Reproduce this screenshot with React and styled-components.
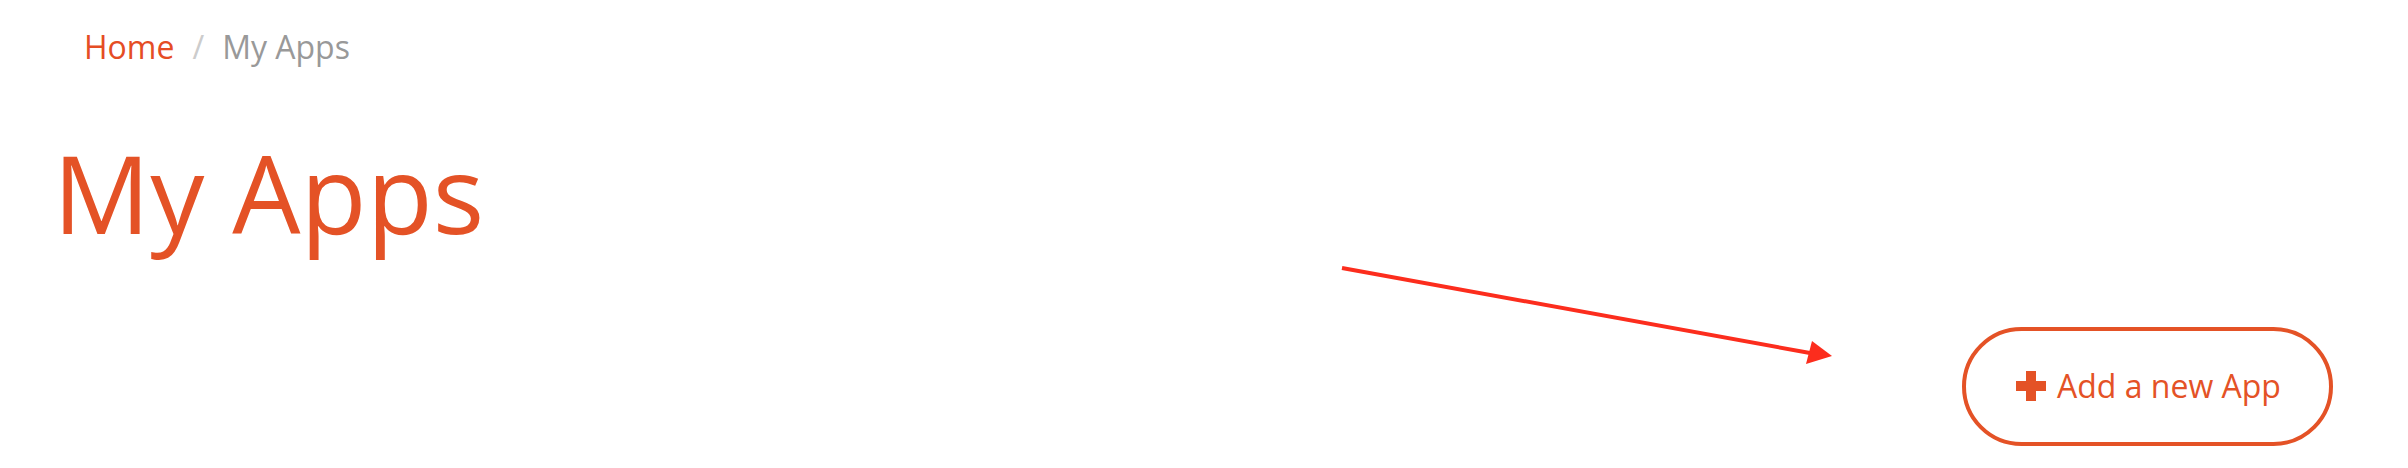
import React from "react";
import styled, { createGlobalStyle } from "styled-components";

const Global = createGlobalStyle`
  html, body { margin: 0; padding: 0; background: #ffffff; }
  body { font-family: "Open Sans", "Noto Sans", sans-serif; }
  * { box-sizing: border-box; }
`;

const Page = styled.div`
  position: relative;
  display: flex;
  flex-direction: column;
  padding: 23px 75px 0 53px;
  min-height: 468px;
`;

const Breadcrumb = styled.nav`
  display: flex;
  align-items: baseline;
  margin-left: 31px;
  font-size: 32px;
  line-height: 48px;
`;

const Crumb = styled.span`
  color: ${(p) => (p.$active ? "#999999" : "#e54d24")};
`;

const Sep = styled.span`
  color: #cccccc;
  padding: 0 18px;
`;

const Title = styled.h1`
  margin: 63px 0 0;
  font-size: 108px;
  font-weight: 400;
  line-height: 118.8px;
  color: #e45226;
`;

const Actions = styled.div`
  display: flex;
  justify-content: flex-end;
  margin-top: 74px;
`;

const AddButton = styled.button`
  display: flex;
  align-items: center;
  justify-content: center;
  gap: 11px;
  width: 371px;
  height: 119px;
  padding: 0 0 0 2px;
  border: 4px solid #e45226;
  border-radius: 60px;
  background: #ffffff;
  color: #e45226;
  font-family: "Open Sans", "Noto Sans", sans-serif;
  font-size: 32px;
  line-height: 32px;
  cursor: pointer;
`;

const Plus = styled.svg`
  width: 30px;
  height: 30px;
  flex: none;
`;

const Arrow = styled.svg`
  position: absolute;
  left: 1330px;
  top: 255px;
  width: 520px;
  height: 120px;
  overflow: visible;
  pointer-events: none;
`;

export default function App() {
  return (
    <>
      <Global />
      <Page>
        <Breadcrumb>
          <Crumb>Home</Crumb>
          <Sep>/</Sep>
          <Crumb $active>My Apps</Crumb>
        </Breadcrumb>
        <Title>My Apps</Title>
        <Actions>
          <AddButton type="button">
            <Plus viewBox="0 0 30 30" aria-hidden="true">
              <rect x="0" y="10" width="30" height="10" fill="#e45226" />
              <rect x="10" y="0" width="10" height="30" fill="#e45226" />
            </Plus>
            <span>Add a new App</span>
          </AddButton>
        </Actions>
        <Arrow viewBox="0 0 520 120" aria-hidden="true">
          <line x1="12" y1="13" x2="480" y2="98" stroke="#fc2d1d" strokeWidth="4" />
          <polygon points="482,86 502,101 476,109" fill="#fc2d1d" />
        </Arrow>
      </Page>
    </>
  );
}
